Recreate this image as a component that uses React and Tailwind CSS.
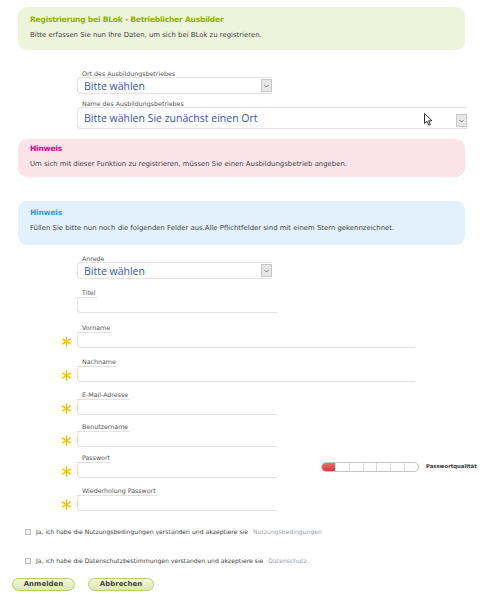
import React from "react";

const font = { fontFamily: '"DejaVu Sans", Verdana, sans-serif' };

const Star = () => (
  <svg width="11" height="11" viewBox="0 0 12 12" className="shrink-0">
    <g stroke="#f2c200" strokeWidth="1.6" strokeLinecap="round">
      <line x1="6" y1="1" x2="6" y2="11" />
      <line x1="1.7" y1="3.5" x2="10.3" y2="8.5" />
      <line x1="1.7" y1="8.5" x2="10.3" y2="3.5" />
    </g>
  </svg>
);

const Notice = ({ title, titleColor, bg, children, className = "" }) => (
  <div className={`rounded-[9px] px-3 ${bg} ${className}`}>
    <div className={`text-[7.6px] font-bold leading-[10px] tracking-[-0.25px] ${titleColor}`}>{title}</div>
    <div className="mt-[6px] text-[6.9px] leading-[8px] text-[#444]">{children}</div>
  </div>
);

const SelectBox = ({ label, value, width, height = 17, className = "" }) => (
  <div className={className}>
    <div className="pl-[5px] text-[6.3px] leading-[7px] text-[#555]">{label}</div>
    <div
      className="relative flex items-center border-t border-l border-b border-[#e2e2e2] rounded-l-[4px] pl-[6px]"
      style={{ width, height }}
    >
      <span className="text-[10.5px] leading-[12px] text-[#3a55a8]" style={{ fontFamily: '"Open Sans", sans-serif' }}>
        {value}
      </span>
      <span className="absolute right-0 bottom-[1px] flex h-[13px] w-[11px] items-center justify-center border border-[#c8c8c8] bg-[#e6e6e6]">
        <svg width="5" height="4" viewBox="0 0 5 4">
          <path d="M0.5 1 L2.5 3 L4.5 1" fill="none" stroke="#666" strokeWidth="0.8" />
        </svg>
      </span>
    </div>
  </div>
);

const Field = ({ label, width, required, className = "" }) => (
  <div className={`flex items-end ${className}`}>
    <div className="flex w-[16px] justify-start pb-[1px]">{required ? <Star /> : null}</div>
    <div>
      <div className="w-fit border-b border-[#e2e2e2] pl-[5px] pr-[1px] text-[6.3px] leading-[8px] text-[#555]">
        {label}
      </div>
      <div
        className="h-[15px] border-l border-b border-[#e2e2e2] rounded-bl-[4px] rounded-tl-[4px]"
        style={{ width }}
      />
    </div>
  </div>
);

const Strength = () => (
  <div className="flex items-center">
    <div className="flex h-[10px] w-[98px] overflow-hidden rounded-full border border-[#c8c8c8] bg-white">
      <div className="h-full w-[13px] bg-gradient-to-b from-[#ef6a6a] to-[#d43a3a]" />
      {[0, 1, 2, 3, 4, 5].map((i) => (
        <div key={i} className="h-full w-[14px] border-l border-[#dcdcdc]" />
      ))}
    </div>
    <span className="ml-[7px] text-[5.3px] font-bold text-[#333]">Passwortqualität</span>
  </div>
);

const Check = ({ text, link, className = "" }) => (
  <div className={`flex h-[8px] items-center pl-[25px] ${className}`}>
    <span className="h-[6px] w-[6px] border border-[#bbb] bg-[#f4f4f4]" />
    <span className="ml-[5px] text-[6.1px] leading-[8px] text-[#444]">{text}</span>
    <span className="ml-[5px] text-[6.1px] leading-[8px] text-[#9aa0a8]">{link}</span>
  </div>
);

const Button = ({ children, className = "" }) => (
  <button
    className={`h-[13px] rounded-full border border-[#b9cc72] bg-gradient-to-b from-[#f3f7dc] to-[#dde8b0] text-[7px] font-bold leading-[11px] text-[#444] ${className}`}
  >
    {children}
  </button>
);

export default function App() {
  return (
    <div className="relative h-[595px] w-[500px] overflow-hidden bg-white" style={font}>
      <div className="w-[465px] pl-[18px] pt-[7px]">
        <Notice
          title="Registrierung bei BLok - Betrieblicher Ausbilder"
          titleColor="text-[#8db300]"
          bg="bg-[#eef3db]"
          className="h-[43px] pt-[8px]"
        >
          Bitte erfassen Sie nun Ihre Daten, um sich bei BLok zu registrieren.
        </Notice>
      </div>

      <div className="pl-[77px] pt-[20px]">
        <SelectBox label="Ort des Ausbildungsbetriebes" value="Bitte wählen" width={195} />
        <SelectBox
          label="Name des Ausbildungsbetriebes"
          value="Bitte wählen Sie zunächst einen Ort"
          width={390}
          height={22}
          className="mt-[6px]"
        />
      </div>

      <div className="w-[465px] pl-[18px] pt-[10px]">
        <Notice
          title="Hinweis"
          titleColor="text-[#e2008a]"
          bg="bg-[#fbe3ea]"
          className="h-[38px] pt-[5px]"
        >
          Um sich mit dieser Funktion zu registrieren, müssen Sie einen Ausbildungsbetrieb angeben.
        </Notice>
      </div>

      <div className="w-[465px] pl-[18px] pt-[24px]">
        <Notice
          title="Hinweis"
          titleColor="text-[#3a9bd3]"
          bg="bg-[#e2f1fb]"
          className="h-[44px] pt-[7px]"
        >
          Füllen Sie bitte nun noch die folgenden Felder aus.Alle Pflichtfelder sind mit einem Stern gekennzeichnet.
        </Notice>
      </div>

      <div className="pl-[77px] pt-[10px]">
        <SelectBox label="Anrede" value="Bitte wählen" width={195} />
      </div>

      <div className="pl-[61px]">
        <Field label="Titel" width={200} className="mt-[10px]" />
        <Field label="Vorname" width={338} required className="mt-[11px]" />
        <Field label="Nachname" width={338} required className="mt-[10px]" />
        <Field label="E-Mail-Adresse" width={200} required className="mt-[9px]" />
        <Field label="Benutzername" width={200} required className="mt-[8px]" />
        <div className="flex items-end">
          <Field label="Passwort" width={200} required className="mt-[7px]" />
          <div className="mb-[6px] ml-[44px]">
            <Strength />
          </div>
        </div>
        <Field label="Wiederholung Passwort" width={200} required className="mt-[9px]" />
      </div>

      <Check
        className="mt-[17px]"
        text="Ja, ich habe die Nutzungsbedingungen verstanden und akzeptiere sie"
        link="Nutzungsbedingungen"
      />
      <Check
        className="mt-[21px]"
        text="Ja, ich habe die Datenschutzbestimmungen verstanden und akzeptiere sie"
        link="Datenschutz"
      />

      <div className="flex gap-[13px] pl-[12px] pt-[13px]">
        <Button className="w-[63px]">Anmelden</Button>
        <Button className="w-[66px]">Abbrechen</Button>
      </div>

      <svg className="absolute left-[424px] top-[113px]" width="9" height="13" viewBox="0 0 9 13">
        <path
          d="M0.5 0.5 L0.5 10.5 L3 8.3 L4.8 12.3 L6.3 11.6 L4.6 7.8 L8 7.8 Z"
          fill="white"
          stroke="black"
          strokeWidth="0.8"
        />
      </svg>
    </div>
  );
}
